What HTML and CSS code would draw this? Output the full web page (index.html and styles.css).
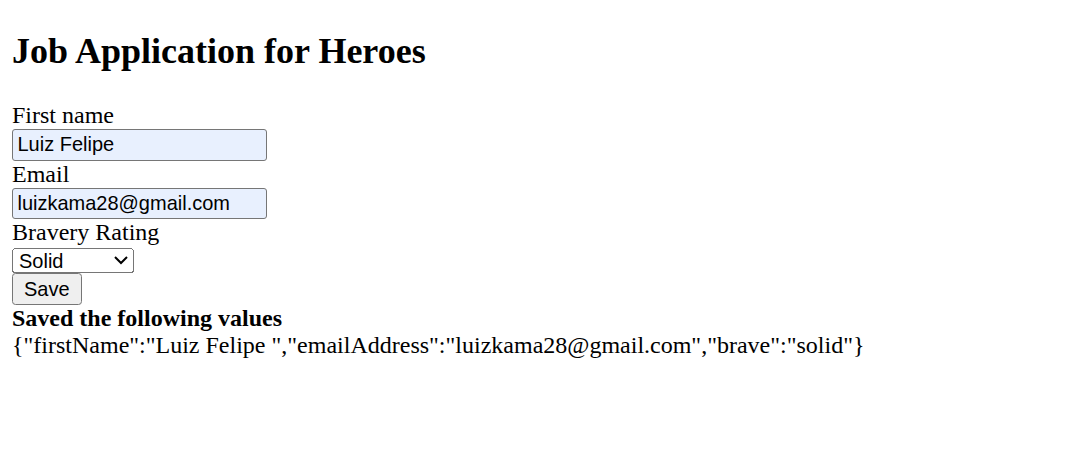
FILE: index.html
```html
<!DOCTYPE html>
<html>
<head>
<meta charset="utf-8">
<link rel="stylesheet" href="styles.css">
</head>
<body>
<section class="app">
  <h1 class="title">Job Application for Heroes</h1>
  <form class="form">
    <div class="field">
      <label class="label" for="firstName">First name</label>
      <input class="text-input" id="firstName" type="text" value="Luiz Felipe">
    </div>
    <div class="field">
      <label class="label" for="email">Email</label>
      <input class="text-input" id="email" type="text" value="luizkama28@gmail.com">
    </div>
    <div class="field">
      <label class="label" for="brave">Bravery Rating</label>
      <select class="select" id="brave">
        <option>Solid</option>
        <option>Heroic</option>
        <option>Legendary</option>
      </select>
    </div>
    <button class="button" type="button">Save</button>
  </form>
  <div class="result">
    <strong class="result-title">Saved the following values</strong>
    <div class="result-json">{"firstName":"Luiz Felipe ","emailAddress":"luizkama28@gmail.com","brave":"solid"}</div>
  </div>
</section>
</body>
</html>
```

FILE: styles.css
```css
html {
  zoom: 1.5;
}
body {
  margin: 8px;
  font-family: "Liberation Serif", "Times New Roman", serif;
  font-size: 16px;
  color: #000;
  background: #fff;
}
.title {
  font-size: 1.5em;
  margin: 12px 0 20px;
  font-weight: bold;
}
.form {
  margin: 0;
}
.label {
  display: block;
}
.text-input {
  display: block;
  box-sizing: border-box;
  width: 170px;
  height: 21px;
  font-family: "Liberation Sans", Arial, sans-serif;
  font-size: 13.333px;
  background: #e8f0fe;
  border: 1px solid #767676;
  border-radius: 2px;
  padding: 1px 3px;
  color: #000;
}
.select {
  display: block;
  box-sizing: border-box;
  width: 81px;
  height: 17px;
  margin-top: 1px;
  font-family: "Liberation Sans", Arial, sans-serif;
  font-size: 13.333px;
  color: #000;
}
.button {
  display: block;
  box-sizing: border-box;
  height: 21px;
  margin: 0;
  font-family: "Liberation Sans", Arial, sans-serif;
  font-size: 13.333px;
}
.result-title {
  display: block;
}
```
